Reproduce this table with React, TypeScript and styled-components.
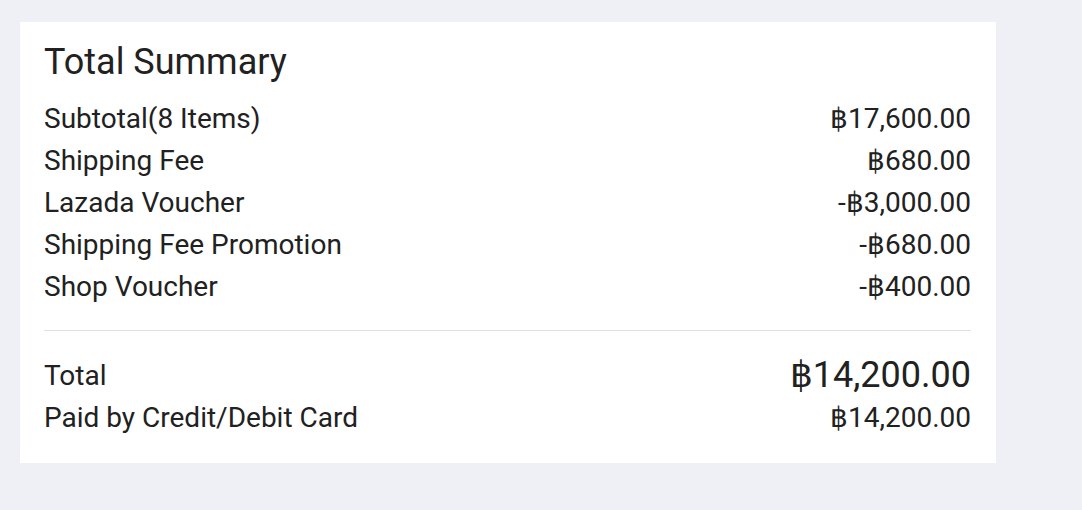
import React from "react";
import styled, { createGlobalStyle } from "styled-components";

const GlobalStyle = createGlobalStyle`
  html, body { margin: 0; padding: 0; background: #eff0f5; }
  body { font-family: Roboto, "Noto Sans", "Liberation Sans", sans-serif; color: #212121; }
`;

const Page = styled.div`
  padding: 22px 0 0 20px;
  height: 488px;
`;

const Card = styled.section`
  width: 976px;
  height: 441px;
  box-sizing: border-box;
  background: #fff;
  padding: 14px 25px 0 24px;
`;

const Title = styled.h2`
  margin: 0 0 9px;
  font-size: 36px;
  line-height: 52px;
  font-weight: 400;
`;

const List = styled.div`
  display: flex;
  flex-direction: column;
`;

const Row = styled.div`
  display: flex;
  justify-content: space-between;
  align-items: center;
  font-size: 28px;
  height: 42px;
`;

const Value = styled.span<{ $big?: boolean }>`
  font-size: ${(p) => (p.$big ? "36px" : "28px")};
`;

const Divider = styled.hr`
  border: none;
  border-top: 1px solid #e0e0e0;
  margin: 23px 0 23px;
`;

const items = [
  ["Subtotal(8 Items)", "฿17,600.00"],
  ["Shipping Fee", "฿680.00"],
  ["Lazada Voucher", "-฿3,000.00"],
  ["Shipping Fee Promotion", "-฿680.00"],
  ["Shop Voucher", "-฿400.00"],
];

export default function App() {
  return (
    <Page>
      <GlobalStyle />
      <Card>
        <Title>Total Summary</Title>
        <List>
          {items.map(([l, v]) => (
            <Row key={l}>
              <span>{l}</span>
              <Value>{v}</Value>
            </Row>
          ))}
        </List>
        <Divider />
        <List>
          <Row>
            <span>Total</span>
            <Value $big>฿14,200.00</Value>
          </Row>
          <Row>
            <span>Paid by Credit/Debit Card</span>
            <Value>฿14,200.00</Value>
          </Row>
        </List>
      </Card>
    </Page>
  );
}
